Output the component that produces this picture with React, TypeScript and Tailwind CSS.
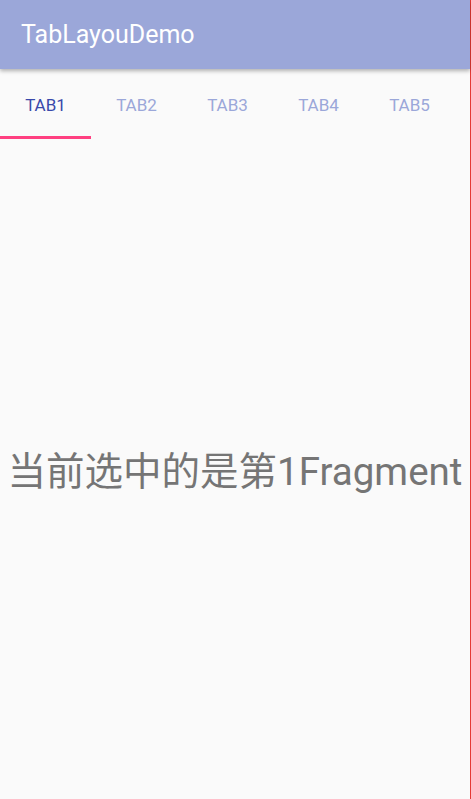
const tabs = ["TAB1", "TAB2", "TAB3", "TAB4", "TAB5"];

export default function App() {
  return (
    <div className="flex h-[799px] w-[471px] bg-[#fafafa] font-['Roboto','Noto_Sans_CJK_SC',sans-serif]">
      <div className="flex w-[470px] flex-col">
        <header className="relative z-10 flex h-[69px] items-center bg-[#9ba7d9] px-[21px] shadow-[0_2px_4px_rgba(0,0,0,0.3)]">
          <h1 className="text-[25px] text-white">TabLayouDemo</h1>
        </header>

        <nav className="flex h-[70px]">
          {tabs.map((t, i) => (
            <div
              key={t}
              className={
                i === 0
                  ? "flex w-[91px] flex-col items-center border-b-[3px] border-[#ff4081] pt-[24px] text-[17px] text-[#3949ab]"
                  : "flex w-[91px] flex-col items-center border-b-[3px] border-transparent pt-[24px] text-[17px] text-[#9ba7d9]"
              }
            >
              {t}
            </div>
          ))}
        </nav>

        <main className="flex flex-1 items-center justify-center pt-[6px]">
          <p className="whitespace-nowrap text-[38.5px] text-[#757575]">当前选中的是第1Fragment</p>
        </main>
      </div>
      <div className="w-px bg-[#e53935]" />
    </div>
  );
}
